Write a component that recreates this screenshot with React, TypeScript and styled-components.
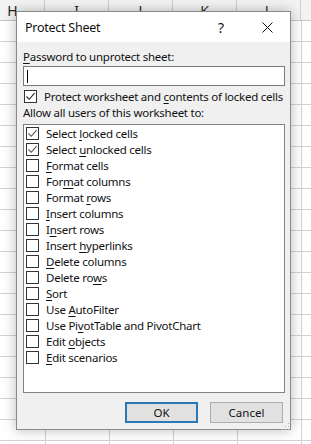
import * as React from "react";
import styled, { createGlobalStyle } from "styled-components";

const GlobalStyle = createGlobalStyle`
  html, body {
    margin: 0;
    padding: 0;
    background: #ffffff;
    font-family: "Noto Sans", "Open Sans", sans-serif;
  }
`;

const Sheet = styled.div`
  position: relative;
  width: 311px;
  height: 444px;
  overflow: hidden;
  background-color: #ffffff;
  background-image: linear-gradient(to bottom, #d3d3d3 1px, transparent 1px),
    linear-gradient(to right, #d3d3d3 1px, transparent 1px);
  background-size: 64px 21px;
  background-position: 45px 20px;
`;

const HeaderRow = styled.div`
  display: flex;
  height: 20px;
  margin-left: -19px;
  background: #f3f3f3;
  border-bottom: 1px solid #c6c6c6;
`;

const HeaderCell = styled.div`
  flex: 0 0 64px;
  box-sizing: border-box;
  border-right: 1px solid #cfcfcf;
  text-align: center;
  font-size: 14px;
  line-height: 22px;
  color: #262626;
`;

const Dialog = styled.div`
  position: absolute;
  left: 16px;
  top: 11px;
  width: 275px;
  height: 419px;
  box-sizing: border-box;
  display: flex;
  flex-direction: column;
  background: #f0f0f0;
  border: 1px solid #8a8a8a;
  box-shadow: 0 0 12px rgba(0, 0, 0, 0.28);
  color: #111;
  font-size: 11.5px;
  letter-spacing: -0.25px;
`;

const TitleBar = styled.div`
  display: flex;
  align-items: center;
  height: 30px;
  padding-left: 8px;
  background: #ffffff;
  font-size: 12.5px;
`;

const Title = styled.div`
  flex: 1;
`;

const TitleButton = styled.div`
  width: 46px;
  height: 30px;
  display: flex;
  align-items: center;
  justify-content: center;
  font-size: 14px;
`;

const Body = styled.div`
  flex: 1;
  display: flex;
  flex-direction: column;
  padding: 7px 5px 8px 6px;
  position: relative;
`;

const Label = styled.div`
  line-height: 16px;
`;

const Key = styled.span`
  text-decoration: underline;
  text-underline-offset: 2px;
`;

const TextBox = styled.div`
  margin-top: 1px;
  height: 20px;
  box-sizing: border-box;
  background: #fff;
  border: 1px solid #7a7a7a;
  display: flex;
  align-items: center;
  padding-left: 3px;
`;

const Caret = styled.div`
  width: 1px;
  height: 13px;
  background: #000;
`;

const CheckRow = styled.label<{ $tight?: boolean }>`
  display: flex;
  align-items: center;
  gap: 7px;
  height: ${(p) => (p.$tight ? "16px" : "18px")};
  padding-left: ${(p) => (p.$tight ? "2px" : "1px")};
  margin-top: ${(p) => (p.$tight ? "0" : "1px")};
  white-space: nowrap;
`;

const Box = styled.span`
  flex: 0 0 13px;
  width: 13px;
  height: 13px;
  box-sizing: border-box;
  border: 1px solid #333;
  background: #fff;
  display: flex;
  align-items: center;
  justify-content: center;
`;

const List = styled.div`
  margin-top: 3px;
  height: 269px;
  box-sizing: border-box;
  background: #fff;
  border: 1px solid #828282;
  display: flex;
  flex-direction: column;
`;

const ButtonRow = styled.div`
  display: flex;
  justify-content: flex-end;
  gap: 12px;
  margin-top: 9px;
  padding-right: 2px;
`;

const Button = styled.button<{ $default?: boolean }>`
  width: 73px;
  height: 21px;
  box-sizing: border-box;
  font-family: inherit;
  font-size: 11.5px;
  color: #111;
  background: #e1e1e1;
  border: ${(p) => (p.$default ? "2px solid #2a78b5" : "1px solid #adadad")};
  padding: 0;
`;

const Grip = styled.div`
  position: absolute;
  right: 1px;
  bottom: 1px;
  width: 8px;
  height: 8px;
  background-image: radial-gradient(#b5b5b5 0.8px, transparent 1px);
  background-size: 3px 3px;
  clip-path: polygon(100% 0, 100% 100%, 0 100%);
`;

const Check = ({ color }: { color: string }) => (
  <svg width="11" height="11" viewBox="0 0 11 11">
    <polyline points="1.5,5.5 4.2,8.3 9.6,2.2" fill="none" stroke={color} strokeWidth="1.1" />
  </svg>
);

type Item = { before: string; key: string; after: string; checked?: boolean };

const items: Item[] = [
  { before: "Select ", key: "l", after: "ocked cells", checked: true },
  { before: "Select ", key: "u", after: "nlocked cells", checked: true },
  { before: "", key: "F", after: "ormat cells" },
  { before: "For", key: "m", after: "at columns" },
  { before: "Format ", key: "r", after: "ows" },
  { before: "", key: "I", after: "nsert columns" },
  { before: "I", key: "n", after: "sert rows" },
  { before: "Insert ", key: "h", after: "yperlinks" },
  { before: "", key: "D", after: "elete columns" },
  { before: "Delete ro", key: "w", after: "s" },
  { before: "", key: "S", after: "ort" },
  { before: "Use ", key: "A", after: "utoFilter" },
  { before: "Use Pi", key: "v", after: "otTable and PivotChart" },
  { before: "Edit ", key: "o", after: "bjects" },
  { before: "", key: "E", after: "dit scenarios" },
];

const App = () => {
  return (
    <Sheet>
      <GlobalStyle />
      <HeaderRow>
        {["H", "I", "J", "K", "L"].map((c) => (
          <HeaderCell key={c}>{c}</HeaderCell>
        ))}
      </HeaderRow>
      <Dialog>
        <TitleBar>
          <Title>Protect Sheet</Title>
          <TitleButton>?</TitleButton>
          <TitleButton>
            <svg width="11" height="11" viewBox="0 0 11 11">
              <path d="M0.5 0.5 L10.5 10.5 M10.5 0.5 L0.5 10.5" stroke="#111" strokeWidth="1" />
            </svg>
          </TitleButton>
        </TitleBar>
        <Body>
          <Label>
            <Key>P</Key>assword to unprotect sheet:
          </Label>
          <TextBox>
            <Caret />
          </TextBox>
          <CheckRow>
            <Box>
              <Check color="#222" />
            </Box>
            <span>
              Protect worksheet and <Key>c</Key>ontents of locked cells
            </span>
          </CheckRow>
          <Label>Allow all users of this worksheet to:</Label>
          <List>
            {items.map((it) => (
              <CheckRow $tight key={it.before + it.key + it.after}>
                <Box>{it.checked && <Check color="#555" />}</Box>
                <span>
                  {it.before}
                  <Key>{it.key}</Key>
                  {it.after}
                </span>
              </CheckRow>
            ))}
          </List>
          <ButtonRow>
            <Button $default>OK</Button>
            <Button>Cancel</Button>
          </ButtonRow>
          <Grip />
        </Body>
      </Dialog>
    </Sheet>
  );
};

export default App;
